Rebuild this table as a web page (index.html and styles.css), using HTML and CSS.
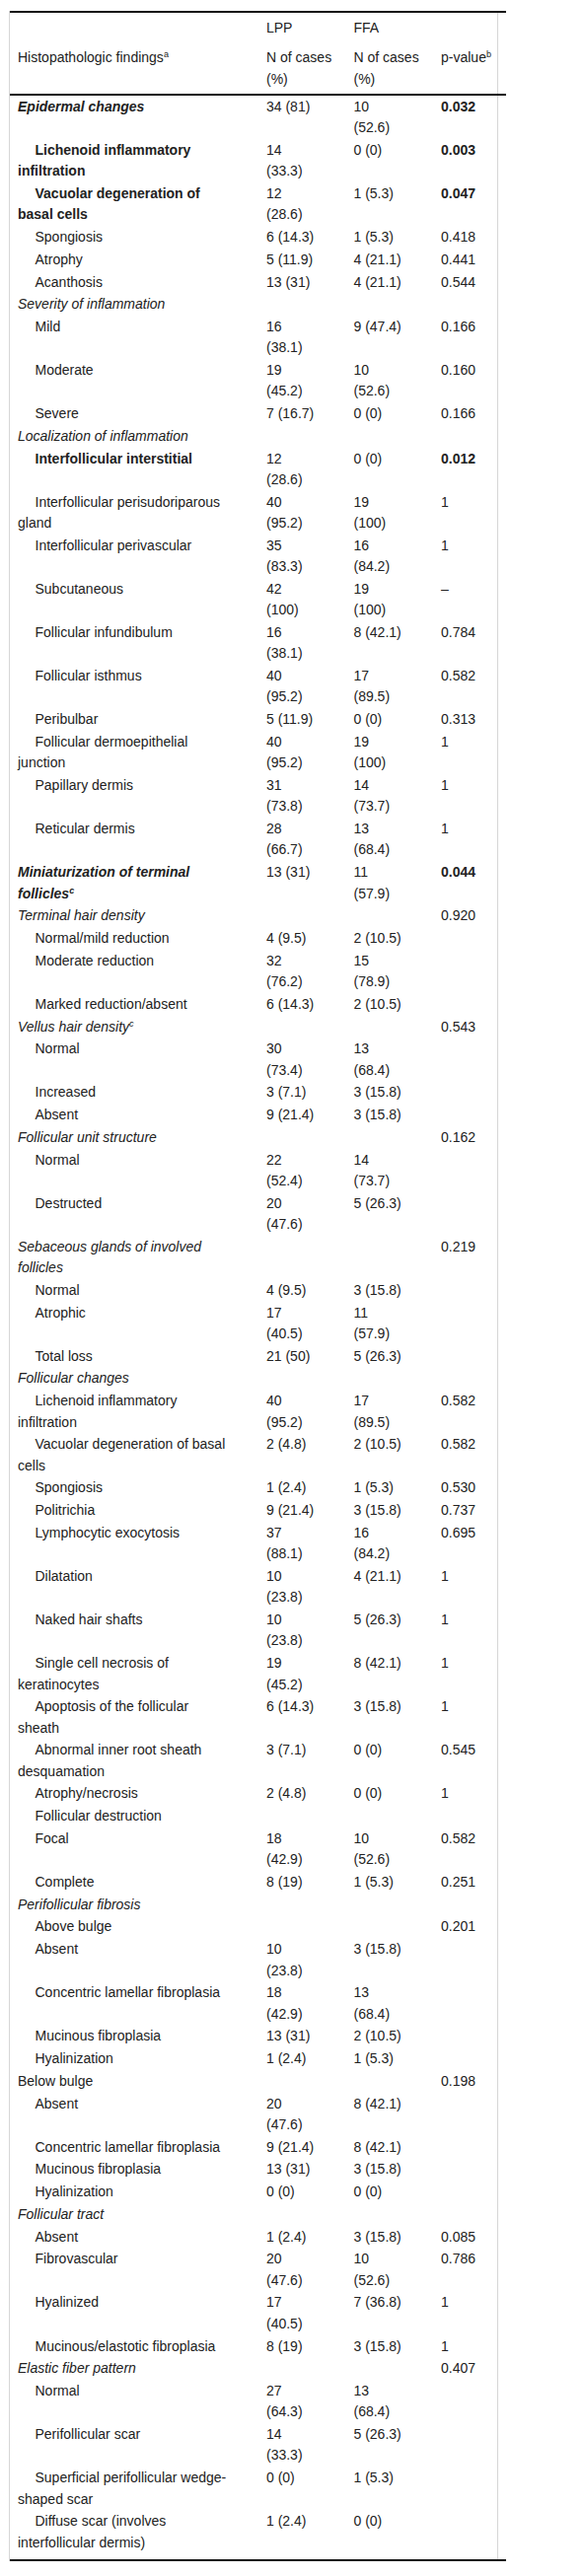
FILE: index.html
```html
<!DOCTYPE html>
<html lang="en">
<head>
  <meta charset="UTF-8" />
  <meta name="viewport" content="width=device-width, initial-scale=1.0" />
  <title>Histopathologic findings: LPP vs FFA</title>
  <link rel="stylesheet" href="styles.css">
</head>
<body>
  <div class="table-wrap">
    <table class="findings">
      <colgroup>
        <col class="col-label">
        <col class="col-num">
        <col class="col-num">
        <col class="col-p">
      </colgroup>
      <thead>
        <tr>
          <th></th>
          <th>LPP</th>
          <th>FFA</th>
          <th></th>
        </tr>
        <tr class="head-last">
          <th>Histopathologic findings<sup>a</sup></th>
          <th>N of cases (%)</th>
          <th>N of cases (%)</th>
          <th>p-value<sup>b</sup></th>
        </tr>
      </thead>
      <tbody>
        <tr><td class="key">Epidermal changes</td><td>34 (81)</td><td>10 (52.6)</td><td class="sig">0.032</td></tr>
        <tr><td class="sub sig">Lichenoid inflammatory infiltration</td><td>14 (33.3)</td><td>0 (0)</td><td class="sig">0.003</td></tr>
        <tr><td class="sub sig">Vacuolar degeneration of basal cells</td><td>12 (28.6)</td><td>1 (5.3)</td><td class="sig">0.047</td></tr>
        <tr><td class="sub">Spongiosis</td><td>6 (14.3)</td><td>1 (5.3)</td><td>0.418</td></tr>
        <tr><td class="sub">Atrophy</td><td>5 (11.9)</td><td>4 (21.1)</td><td>0.441</td></tr>
        <tr><td class="sub">Acanthosis</td><td>13 (31)</td><td>4 (21.1)</td><td>0.544</td></tr>
        <tr><td class="cat">Severity of inflammation</td><td></td><td></td><td></td></tr>
        <tr><td class="sub">Mild</td><td>16 (38.1)</td><td>9 (47.4)</td><td>0.166</td></tr>
        <tr><td class="sub">Moderate</td><td>19 (45.2)</td><td>10 (52.6)</td><td>0.160</td></tr>
        <tr><td class="sub">Severe</td><td>7 (16.7)</td><td>0 (0)</td><td>0.166</td></tr>
        <tr><td class="cat">Localization of inflammation</td><td></td><td></td><td></td></tr>
        <tr><td class="sub sig">Interfollicular interstitial</td><td>12 (28.6)</td><td>0 (0)</td><td class="sig">0.012</td></tr>
        <tr><td class="sub">Interfollicular perisudoriparous gland</td><td>40 (95.2)</td><td>19 (100)</td><td>1</td></tr>
        <tr><td class="sub">Interfollicular perivascular</td><td>35 (83.3)</td><td>16 (84.2)</td><td>1</td></tr>
        <tr><td class="sub">Subcutaneous</td><td>42 (100)</td><td>19 (100)</td><td>–</td></tr>
        <tr><td class="sub">Follicular infundibulum</td><td>16 (38.1)</td><td>8 (42.1)</td><td>0.784</td></tr>
        <tr><td class="sub">Follicular isthmus</td><td>40 (95.2)</td><td>17 (89.5)</td><td>0.582</td></tr>
        <tr><td class="sub">Peribulbar</td><td>5 (11.9)</td><td>0 (0)</td><td>0.313</td></tr>
        <tr><td class="sub">Follicular dermoepithelial junction</td><td>40 (95.2)</td><td>19 (100)</td><td>1</td></tr>
        <tr><td class="sub">Papillary dermis</td><td>31 (73.8)</td><td>14 (73.7)</td><td>1</td></tr>
        <tr><td class="sub">Reticular dermis</td><td>28 (66.7)</td><td>13 (68.4)</td><td>1</td></tr>
        <tr><td class="key">Miniaturization of terminal follicles<sup>c</sup></td><td>13 (31)</td><td>11 (57.9)</td><td class="sig">0.044</td></tr>
        <tr><td class="cat">Terminal hair density</td><td></td><td></td><td>0.920</td></tr>
        <tr><td class="sub">Normal/mild reduction</td><td>4 (9.5)</td><td>2 (10.5)</td><td></td></tr>
        <tr><td class="sub">Moderate reduction</td><td>32 (76.2)</td><td>15 (78.9)</td><td></td></tr>
        <tr><td class="sub">Marked reduction/absent</td><td>6 (14.3)</td><td>2 (10.5)</td><td></td></tr>
        <tr><td class="cat">Vellus hair density<sup>c</sup></td><td></td><td></td><td>0.543</td></tr>
        <tr><td class="sub">Normal</td><td>30 (73.4)</td><td>13 (68.4)</td><td></td></tr>
        <tr><td class="sub">Increased</td><td>3 (7.1)</td><td>3 (15.8)</td><td></td></tr>
        <tr><td class="sub">Absent</td><td>9 (21.4)</td><td>3 (15.8)</td><td></td></tr>
        <tr><td class="cat">Follicular unit structure</td><td></td><td></td><td>0.162</td></tr>
        <tr><td class="sub">Normal</td><td>22 (52.4)</td><td>14 (73.7)</td><td></td></tr>
        <tr><td class="sub">Destructed</td><td>20 (47.6)</td><td>5 (26.3)</td><td></td></tr>
        <tr><td class="cat">Sebaceous glands of involved follicles</td><td></td><td></td><td>0.219</td></tr>
        <tr><td class="sub">Normal</td><td>4 (9.5)</td><td>3 (15.8)</td><td></td></tr>
        <tr><td class="sub">Atrophic</td><td>17 (40.5)</td><td>11 (57.9)</td><td></td></tr>
        <tr><td class="sub">Total loss</td><td>21 (50)</td><td>5 (26.3)</td><td></td></tr>
        <tr><td class="cat">Follicular changes</td><td></td><td></td><td></td></tr>
        <tr><td class="sub">Lichenoid inflammatory infiltration</td><td>40 (95.2)</td><td>17 (89.5)</td><td>0.582</td></tr>
        <tr><td class="sub">Vacuolar degeneration of basal cells</td><td>2 (4.8)</td><td>2 (10.5)</td><td>0.582</td></tr>
        <tr><td class="sub">Spongiosis</td><td>1 (2.4)</td><td>1 (5.3)</td><td>0.530</td></tr>
        <tr><td class="sub">Politrichia</td><td>9 (21.4)</td><td>3 (15.8)</td><td>0.737</td></tr>
        <tr><td class="sub">Lymphocytic exocytosis</td><td>37 (88.1)</td><td>16 (84.2)</td><td>0.695</td></tr>
        <tr><td class="sub">Dilatation</td><td>10 (23.8)</td><td>4 (21.1)</td><td>1</td></tr>
        <tr><td class="sub">Naked hair shafts</td><td>10 (23.8)</td><td>5 (26.3)</td><td>1</td></tr>
        <tr><td class="sub">Single cell necrosis of keratinocytes</td><td>19 (45.2)</td><td>8 (42.1)</td><td>1</td></tr>
        <tr><td class="sub">Apoptosis of the follicular sheath</td><td>6 (14.3)</td><td>3 (15.8)</td><td>1</td></tr>
        <tr><td class="sub">Abnormal inner root sheath desquamation</td><td>3 (7.1)</td><td>0 (0)</td><td>0.545</td></tr>
        <tr><td class="sub">Atrophy/necrosis</td><td>2 (4.8)</td><td>0 (0)</td><td>1</td></tr>
        <tr><td class="sub">Follicular destruction</td><td></td><td></td><td></td></tr>
        <tr><td class="sub">Focal</td><td>18 (42.9)</td><td>10 (52.6)</td><td>0.582</td></tr>
        <tr><td class="sub">Complete</td><td>8 (19)</td><td>1 (5.3)</td><td>0.251</td></tr>
        <tr><td class="cat">Perifollicular fibrosis</td><td></td><td></td><td></td></tr>
        <tr><td class="sub">Above bulge</td><td></td><td></td><td>0.201</td></tr>
        <tr><td class="sub">Absent</td><td>10 (23.8)</td><td>3 (15.8)</td><td></td></tr>
        <tr><td class="sub">Concentric lamellar fibroplasia</td><td>18 (42.9)</td><td>13 (68.4)</td><td></td></tr>
        <tr><td class="sub">Mucinous fibroplasia</td><td>13 (31)</td><td>2 (10.5)</td><td></td></tr>
        <tr><td class="sub">Hyalinization</td><td>1 (2.4)</td><td>1 (5.3)</td><td></td></tr>
        <tr><td>Below bulge</td><td></td><td></td><td>0.198</td></tr>
        <tr><td class="sub">Absent</td><td>20 (47.6)</td><td>8 (42.1)</td><td></td></tr>
        <tr><td class="sub">Concentric lamellar fibroplasia</td><td>9 (21.4)</td><td>8 (42.1)</td><td></td></tr>
        <tr><td class="sub">Mucinous fibroplasia</td><td>13 (31)</td><td>3 (15.8)</td><td></td></tr>
        <tr><td class="sub">Hyalinization</td><td>0 (0)</td><td>0 (0)</td><td></td></tr>
        <tr><td class="cat">Follicular tract</td><td></td><td></td><td></td></tr>
        <tr><td class="sub">Absent</td><td>1 (2.4)</td><td>3 (15.8)</td><td>0.085</td></tr>
        <tr><td class="sub">Fibrovascular</td><td>20 (47.6)</td><td>10 (52.6)</td><td>0.786</td></tr>
        <tr><td class="sub">Hyalinized</td><td>17 (40.5)</td><td>7 (36.8)</td><td>1</td></tr>
        <tr><td class="sub">Mucinous/elastotic fibroplasia</td><td>8 (19)</td><td>3 (15.8)</td><td>1</td></tr>
        <tr><td class="cat">Elastic fiber pattern</td><td></td><td></td><td>0.407</td></tr>
        <tr><td class="sub">Normal</td><td>27 (64.3)</td><td>13 (68.4)</td><td></td></tr>
        <tr><td class="sub">Perifollicular scar</td><td>14 (33.3)</td><td>5 (26.3)</td><td></td></tr>
        <tr><td class="sub">Superficial perifollicular wedge-shaped scar</td><td>0 (0)</td><td>1 (5.3)</td><td></td></tr>
        <tr><td class="sub">Diffuse scar (involves interfollicular dermis)</td><td>1 (2.4)</td><td>0 (0)</td><td></td></tr>
      </tbody>
    </table>
  </div>
</body>
</html>
```

FILE: styles.css
```css
body {
  margin: 0;
  background-color: #fff;
  color: #222;
  font-family: "Liberation Sans", Arial, sans-serif;
  font-size: 14px;
}
.table-wrap {
  width: 494px;
  margin: 11px 0 0 9px;
  border-left: 1px solid #d6d6d6;
  border-right: 1px solid #d6d6d6;
}
.findings {
  width: 502.5px;
  table-layout: fixed;
  border-collapse: separate;
  border-spacing: 0;
  border-top: 2px solid #111;
  border-bottom: 2px solid #111;
}
.col-label {
  width: 252px;
}
.col-num {
  width: 88.5px;
}
.col-p {
  width: 73.5px;
}
th, td {
  text-align: left;
  vertical-align: top;
  line-height: 21.36px;
}
th {
  font-weight: normal;
  padding: 5px 8px 4px 8px;
}
.head-last th {
  border-bottom: 2px solid #111;
}
td {
  padding: 0.7px 30px 0.7px 8px;
}
td:last-child {
  padding-right: 8px;
}
tbody tr:last-child td {
  padding-bottom: 6px;
}
sup {
  font-size: 0.65em;
  line-height: 0;
  vertical-align: 0.5em;
}
.sub {
  text-indent: 17.5px;
}
.cat {
  font-style: italic;
}
.key {
  font-weight: bold;
  font-style: italic;
}
.sig {
  font-weight: bold;
}
```
